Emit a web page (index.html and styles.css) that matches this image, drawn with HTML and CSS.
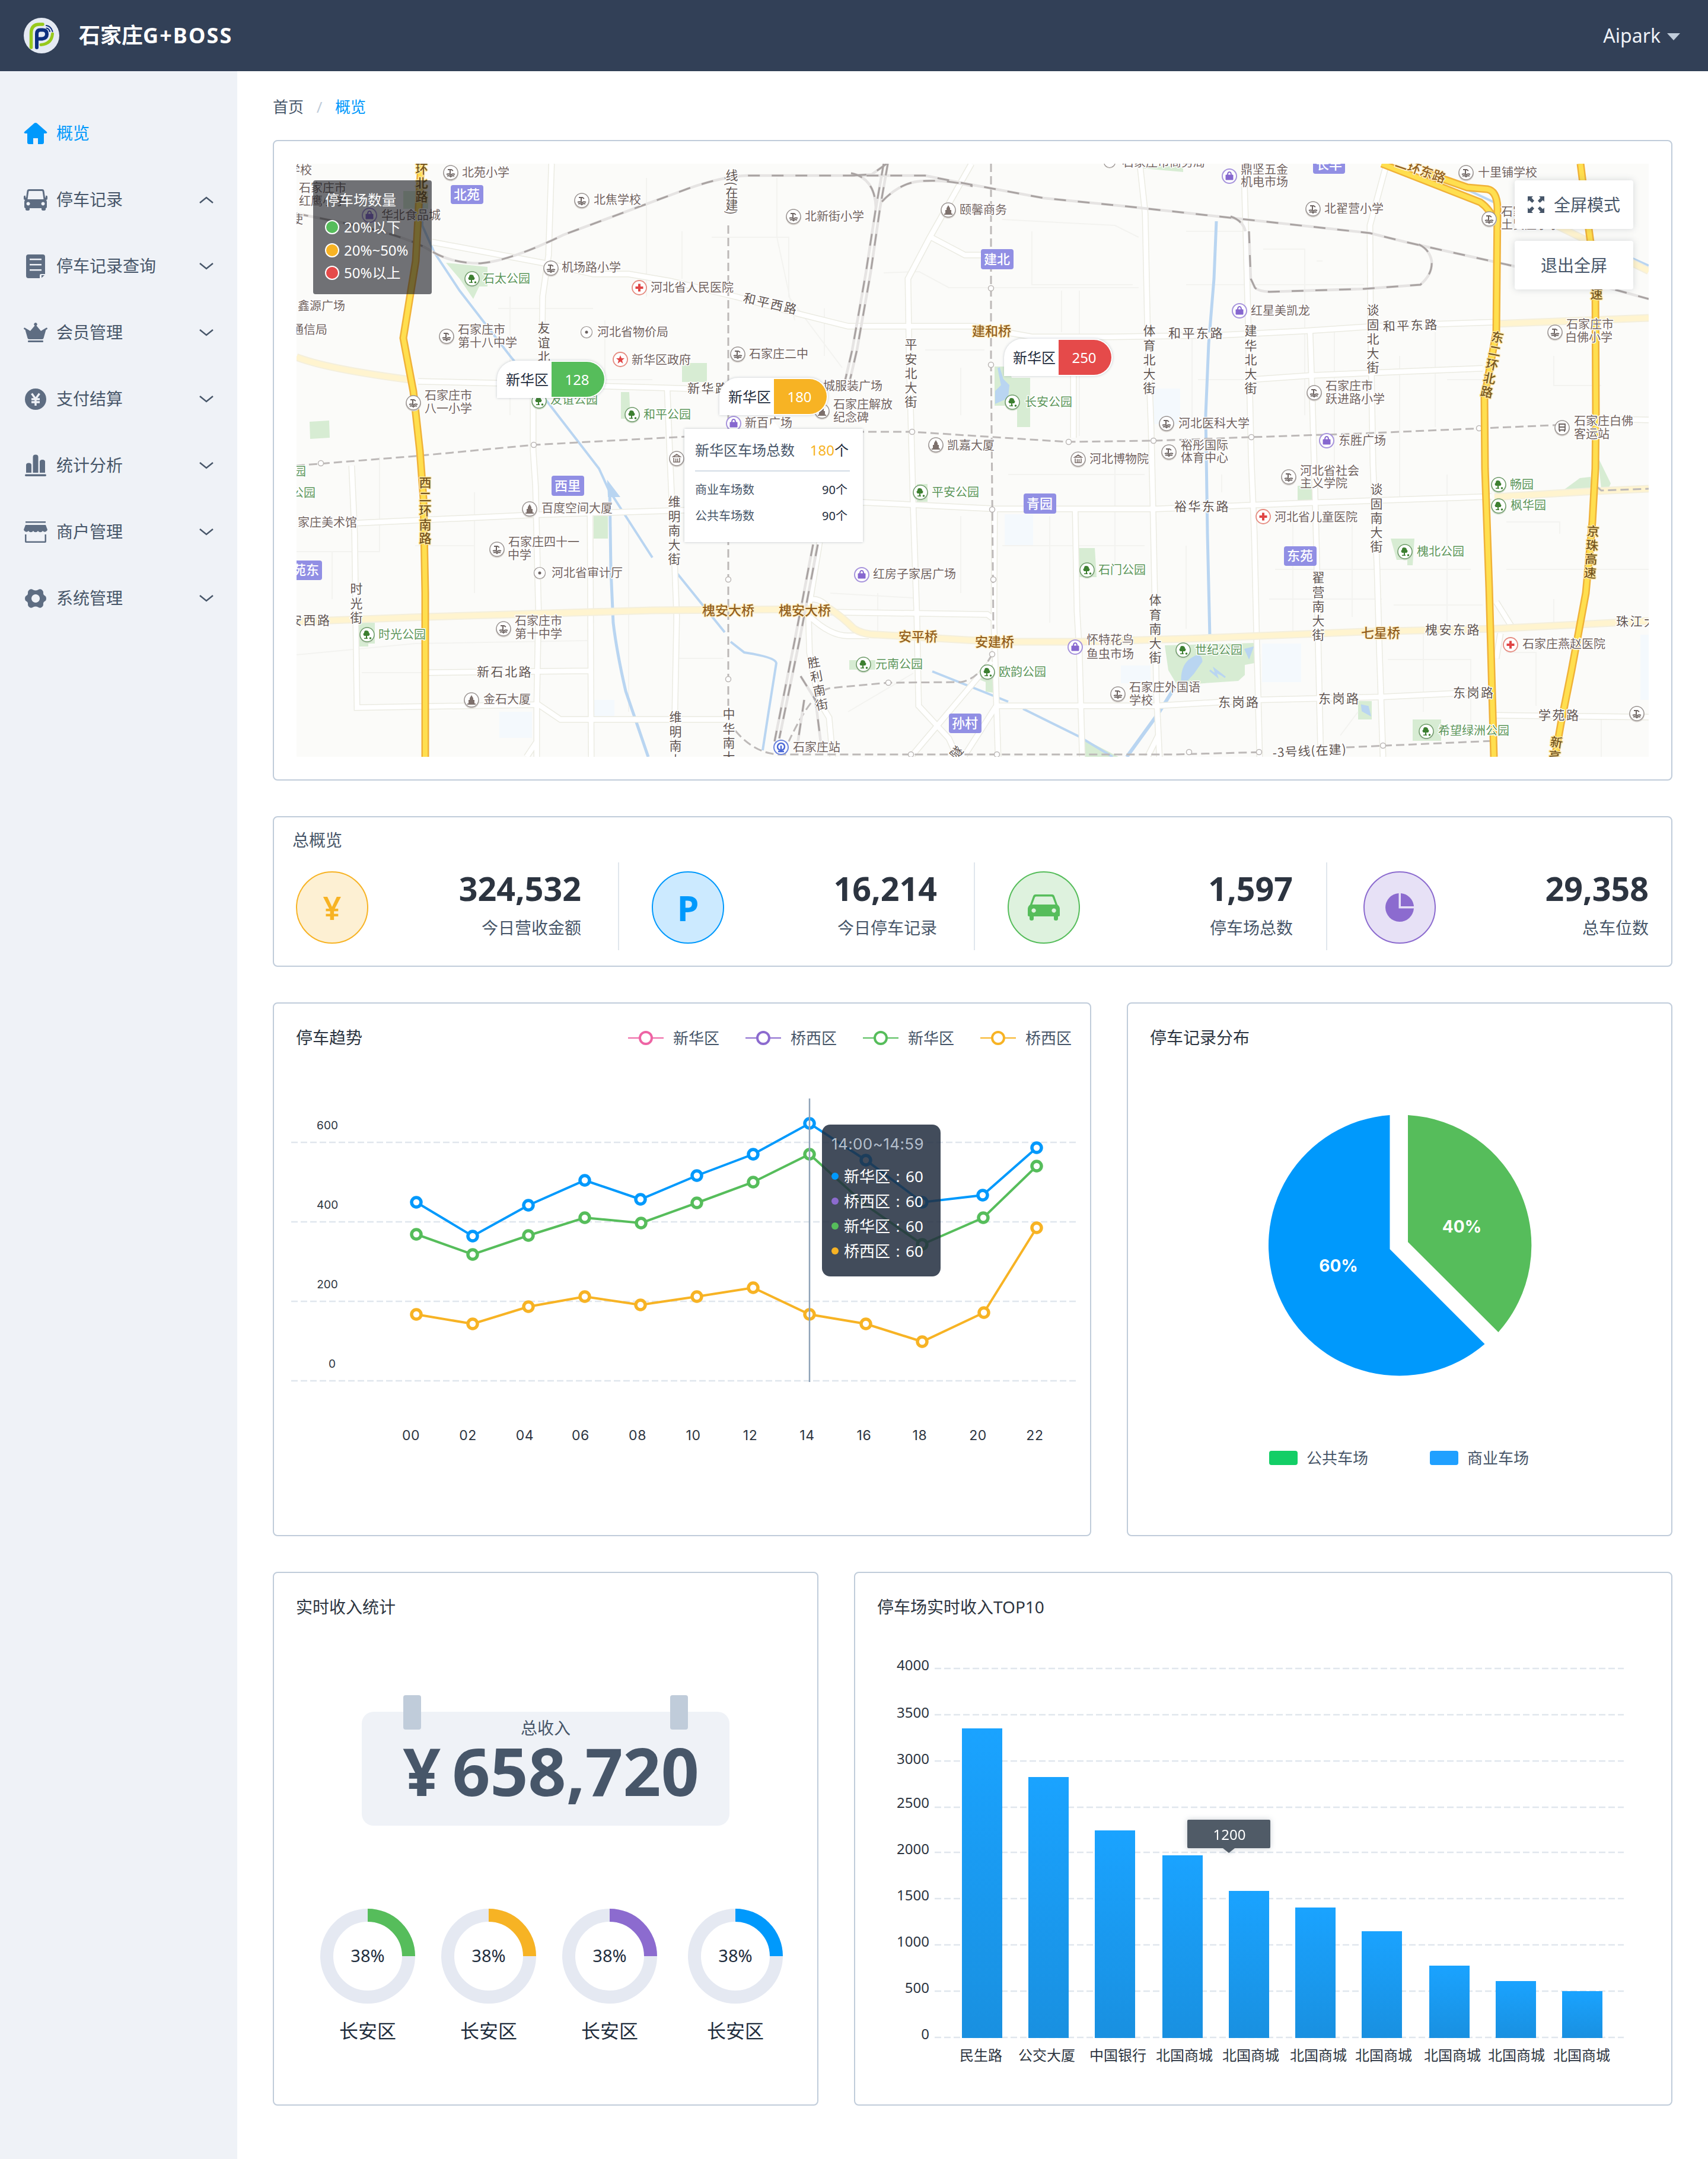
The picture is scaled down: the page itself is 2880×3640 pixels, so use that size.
FILE: index.html
```html
<!DOCTYPE html>
<html lang="zh-CN">
<head>
<meta charset="utf-8">
<title>石家庄G+BOSS</title>
<link rel="stylesheet" href="styles.css">
</head>
<body>
<header class="topbar">
  <div class="brand">
    <svg class="logo" viewBox="-30 -30 60 60">
      <circle r="30" fill="#e5eaf3"/>
      <path d="M-17.500 20V-4Q-17.500 -19 -3 -19H2" fill="none" stroke="#97c91c" stroke-width="5.500" stroke-linecap="round"/>
      <path d="M-1 15.500Q17 14 18.500 -3" fill="none" stroke="#97c91c" stroke-width="5" stroke-linecap="round"/>
      <path d="M-8 20V-3Q-8 -9.500 -2 -9.500H2Q9 -9.500 9 -2.500T1 5.500H-4" fill="none" stroke="#0d2f7e" stroke-width="6" stroke-linecap="round"/>
      <path d="M8 -17Q16 -16 18.500 -7M8.500 -12.500Q13 -11.500 14 -7" fill="none" stroke="#0d2f7e" stroke-width="2.200" stroke-linecap="round"/>
    </svg>
    <h1 class="brand-name">石家庄<span class="brand-latin">G+BOSS</span></h1>
  </div>
  <div class="user">Aipark<svg class="caret" viewBox="0 0 22 12"><path d="M0 0H22L11 12Z"/></svg></div>
</header>

<div class="layout">
<nav class="sidebar">
  <a class="nav-item active"><svg class="nav-icon" viewBox="0 0 40 40"><path d="M18 2.500Q20 1.300 22 2.500L38.500 17Q41 20 37 20H34V35Q34 38 31 38H24V28H16V38H9Q6 38 6 35V20H3Q-1 20 1.500 17Z"/></svg><span>概览</span></a>
  <a class="nav-item"><svg class="nav-icon" viewBox="0 0 40 40"><path fill-rule="evenodd" d="M9 2H31Q34 2 34.500 5L36 16H37V13Q40 12 40 15V18Q40 20 38 20L39 23V32Q39 34 37 34V36Q37 38 33.500 38T30 36V34H10V36Q10 38 6.500 38T3 36V34Q1 34 1 32V23L2 20Q0 20 0 18V15Q0 12 3 13V16H4L5.500 5Q6 2 9 2ZM9.500 5Q8.500 5 8.300 6L6.500 19H33.500L31.700 6Q31.500 5 30.500 5ZM7.500 23.500A3 3 0 1 0 7.600 23.500ZM32.500 23.500A3 3 0 1 0 32.600 23.500Z"/></svg><span>停车记录</span><svg class="chev" viewBox="0 0 24 14"><path d="M1 12L12 3L23 12"/></svg></a>
  <a class="nav-item"><svg class="nav-icon" viewBox="0 0 40 40"><path fill-rule="evenodd" d="M8 0H32Q36 0 36 4V33H29Q27 33 27 35V40H8Q4 40 4 36V4Q4 0 8 0ZM10 7V9.500H30V7ZM10 16V18.500H30V16ZM10 25V27.500H30V25ZM30 35H35L30 39.500Z"/></svg><span>停车记录查询</span><svg class="chev" viewBox="0 0 24 14"><path d="M1 2L12 11L23 2"/></svg></a>
  <a class="nav-item"><svg class="nav-icon" viewBox="0 0 40 40"><path d="M1.800 11.500L11 17L18.600 8A2.600 2.600 0 1 1 21.400 8L29 17L38.200 11.500Q40 11 40 13Q39.500 14.500 37.500 15L33.500 29Q33 31 31 31H9Q7 31 6.500 29L2.500 15Q0.500 14.500 0 13Q0 11 1.800 11.500ZM8 33H32Q33 33 33 34.500T32 36H8Q7 36 7 34.500T8 33Z"/></svg><span>会员管理</span><svg class="chev" viewBox="0 0 24 14"><path d="M1 2L12 11L23 2"/></svg></a>
  <a class="nav-item"><svg class="nav-icon" viewBox="0 0 40 40"><circle cx="20" cy="20" r="18"/><path d="M13.500 10.500L20 19.500L26.500 10.500M20 19V31M13 20H27M13 25H27" fill="none" stroke="#eff2f7" stroke-width="3.400"/></svg><span>支付结算</span><svg class="chev" viewBox="0 0 24 14"><path d="M1 2L12 11L23 2"/></svg></a>
  <a class="nav-item"><svg class="nav-icon" viewBox="0 0 40 40"><path d="M4 32V19Q4 15.500 8.500 15.500T13 19V32ZM15.500 32V5.500Q15.500 1.500 20 1.500T24.500 5.500V32ZM27 32V13.500Q27 10 31.500 10T36 13.500V32ZM3.500 34.500H36.500Q38 34.500 38 36.200T36.500 38H3.500Q2 38 2 36.200T3.500 34.500Z"/></svg><span>统计分析</span><svg class="chev" viewBox="0 0 24 14"><path d="M1 2L12 11L23 2"/></svg></a>
  <a class="nav-item"><svg class="nav-icon" viewBox="0 0 40 40"><path fill-rule="evenodd" d="M3 2H37V4.500H3ZM3 8H37L40 16A4.500 4.500 0 0 1 32 18A4.600 4.600 0 0 1 24 18A4.600 4.600 0 0 1 16 18A4.600 4.600 0 0 1 8 18A4.500 4.500 0 0 1 0 16ZM2 24H4.500V35.500H35.500V24H38V36Q38 38 36 38H4Q2 38 2 36Z"/></svg><span>商户管理</span><svg class="chev" viewBox="0 0 24 14"><path d="M1 2L12 11L23 2"/></svg></a>
  <a class="nav-item"><svg class="nav-icon" viewBox="0 0 40 40"><path fill-rule="evenodd" d="M11 4.500Q13 3.500 16 5.500Q20 7.500 24 5.500Q27 3.500 29 4.500Q33 6.500 33 10Q32.500 14 36 15.500Q38 16.500 38 20T36 24.500Q32.500 26 33 30Q33 33.500 29 35.500Q27 36.500 24 34.500Q20 32.500 16 34.500Q13 36.500 11 35.500Q7 33.500 7 30Q7.500 26 4 24.500Q2 23.500 2 20T4 15.500Q7.500 14 7 10Q7 6.500 11 4.500ZM20 13A7 7 0 1 0 20.100 13Z"/></svg><span>系统管理</span><svg class="chev" viewBox="0 0 24 14"><path d="M1 2L12 11L23 2"/></svg></a>
</nav>

<main class="content">
  <div class="crumbs"><span>首页</span><span class="sep">/</span><span class="here">概览</span></div>

  <section class="card map-card">
    <svg class="map" viewBox="500 276 2280 1000">
      <defs>
        <g id="pin"><circle r="13" cy="1.500" fill="#d8d4d0"/><circle r="12" fill="#fff" stroke="#9a9492" stroke-width="1.500"/></g>
        <g id="school"><use href="#pin"/><path d="M-5 -5H1L4 -3M-1 -5V2M-7 3Q-3 1 0 4Q3 1 7 3M-6 6Q-3 4 0 7Q3 4 6 6" fill="none" stroke="#6b6260" stroke-width="2"/></g>
        <g id="bld"><use href="#pin"/><path d="M0 -8L3 -3V0H5V6H-5V0H-3V-3ZM-7 6H7V8H-7Z" fill="#7d706c"/></g>
        <g id="museum"><use href="#pin"/><path d="M-6 -3L0 -7L6 -3ZM-5 -1V6H5V-1M-1.500 0V6M1.500 0V6" fill="none" stroke="#7d706c" stroke-width="1.600"/></g>
        <g id="park"><circle r="13" cy="1.500" fill="#cfdccb"/><circle r="12" fill="#fff" stroke="#6d9a68" stroke-width="1.500"/><path d="M-2 -7Q3 -7 3 -3Q6 -1 3 2H-5Q-8 -1 -5 -3Q-5 -7 -2 -7ZM-2 2H0V7H-2ZM-5 5.500H1V7H-5Z" fill="#3d7f31"/><circle cx="5.500" cy="6" r="1.800" fill="#3d7f31"/></g>
        <g id="hosp"><circle r="12" fill="#fff" stroke="#e58b80" stroke-width="1.800"/><path d="M-6.500 0H6.500M0 -6.500V6.500" stroke="#e04545" stroke-width="4"/></g>
        <g id="gov"><circle r="12" fill="#fff" stroke="#e58b80" stroke-width="1.800"/><path d="M0 -7L2 -2H7L3 1.500L4.500 7L0 3.500L-4.500 7L-3 1.500L-7 -2H-2Z" fill="#e04545"/></g>
        <g id="shop"><circle r="12" fill="#fff" stroke="#a794dc" stroke-width="2"/><path d="M-6 -2H6V6H-6Z" fill="#8667cf" stroke="#8667cf" stroke-width="1"/><path d="M-3 -2Q-3 -7 0 -7T3 -2" fill="none" stroke="#8667cf" stroke-width="2"/></g>
        <g id="rail"><circle r="12" fill="#fff" stroke="#6a82dc" stroke-width="2"/><circle r="6" cy="-1" fill="none" stroke="#4a68d8" stroke-width="2.500"/><path d="M0 -3V7M-5 7H5" stroke="#4a68d8" stroke-width="2.500"/></g>
        <g id="dot"><circle r="10" cy="1" fill="#d8d4d0"/><circle r="9.500" fill="#fff" stroke="#9a9492" stroke-width="1.200"/><circle r="2.500" fill="#6b6260"/></g>
        <g id="bus"><use href="#pin"/><path d="M-5 -6H5V4H-5ZM-5 -1H5M-4 4V7M4 4V7" fill="none" stroke="#6b6260" stroke-width="1.800"/></g>
      </defs>
      <rect x="500" y="276" width="2280" height="1000" fill="#fbfbf9"/>

      <g class="parks">
        <path d="M752 443L822 450V483H808L798 504L775 470Z"/><path d="M1150 612H1192V644H1150Z"/><path d="M1047 661H1061L1063 706H1047Z"/><path d="M522 711L555 709L556 738L523 740Z"/>
        <path d="M680 322H722V352H680Z"/><path d="M1677 618H1700L1706 637H1737V720H1715V684H1677Z"/><path d="M1001 870H1025V908H1001Z"/><path d="M604 1050H632V1085H621V1090H605Z"/>
        <path d="M1819 924H1846L1849 973H1820Z"/><path d="M1546 816H1564V846H1546Z"/><path d="M1432 1113H1476V1129H1432Z"/><path d="M1645 1143L1668 1112L1676 1118V1168L1662 1166V1150Z"/>
        <path d="M1964 1088L2115 1084V1118L2099 1121V1138L2088 1148L1985 1155L1970 1130Z"/><path d="M2345 908H2385L2382 953H2373V944H2355Z"/><path d="M2188 819H2213V845H2188Z"/><path d="M2290 1182H2313V1213H2290Z"/>
        <path d="M2382 1213H2430V1249H2382Z"/><path d="M1828 1246L1886 1276H1828Z"/><path d="M2634 828L2664 806L2682 804L2685 828Z"/><path d="M2694 770L2716 815L2712 824H2700Z"/><path d="M1925 278L1995 281V290L1928 284Z"/><path d="M902 660H922V680H902Z"/>
      </g>
      <g fill="#f4f9fd"><path d="M842 1200H897V1244H842ZM1002 1180H1036V1212H1002ZM1694 867H1742V920H1694ZM1890 1122H1940V1152H1890ZM2128 1085H2194V1150H2128ZM1945 655H1990V715H1945ZM2766 1070H2780V1180H2766Z"/></g>

      <g class="minor">
        <path d="M500 930H560V1010M640 770V930H560M800 830V1000M800 920H700M840 520H1000M1090 300V500M500 1104L700 1085L990 1080M860 700V500M1020 540V640H1100M1060 880V1200M1140 1110H1220M1150 390V470M610 1134H720M1310 300V400L1340 540M1200 400H1330V500L1420 620M1490 460L1550 458L1600 485H1920M1790 490V560M1820 490V735M1740 390V480H1910M1690 370L1880 380L1920 400M1620 620V700M1390 520V600M1560 590H1660"/>
        <path d="M1480 1000V1070M1400 1000L1540 1008M1620 870V1000M1690 920H1930M1770 870V1050M1880 780V950M1700 800H1930M1430 1200L1540 1135M2010 560V720M2130 420H2200V700M2220 440H2230M2000 480H2300M2420 560V720M2020 640H2110M2250 560V800M2360 600V840M2440 800V1050M2540 960H2780M2620 1010V1060M2540 880H2630V900M2340 1112H2480V1230M2350 1020H2500M2150 960H2480M2180 880V1070M2060 800V830M2000 920V1060M2280 880V1040M2140 1010H2330M2260 1240L2290 1200M2400 1060V1200M2540 1100H2590V1190M2700 1210V1276M2000 390H2100M2620 600V650H2700M2440 640H2520"/>
      </g>

      <g class="river">
        <path d="M712 330V380L732 425L775 490L860 600L925 680L1010 790L1026 825L1100 940M1142 967L1222 1066M1232 1082L1255 1100Q1308 1108 1309 1118L1296 1200L1286 1265"/>
        <path d="M1028 820L1030 960L1034 1050Q1040 1100 1055 1165L1093 1276" stroke-width="5"/><path d="M1026 815L1042 836H1027Z" fill="#b9d5f1"/>
        <path d="M2051 373L2047 470L2038 580L2033 700L2036 900L2040 1074" stroke-width="5"/><path d="M1572 1132L1700 1183M1725 1195L1820 1242L1876 1276"/><path d="M1980 1160L1955 1200L1900 1276" stroke-width="6"/><path d="M2436 302L2530 346M2630 383L2700 412L2780 448"/>
        <path d="M1684 620L1690 640L1700 650L1698 670L1680 678V660L1690 650Z" fill="#b9d5f1"/><path d="M2010 1110Q2025 1100 2026 1115L2012 1135L2002 1146H1993Q1993 1120 2010 1110ZM2040 1130L2052 1140L2048 1128L2066 1142M2100 1095L2112 1092L2106 1108Z" fill="#b9d5f1" stroke-width="3"/><path d="M2297 1190L2306 1192L2309 1204L2298 1198Z" fill="#b9d5f1"/>
      </g>

      <g class="road-case"><use href="#roads"/></g>
      <g class="road-fill"><g id="roads">
        <path d="M930 276L925 430L915 500L914 580M899 670V760L903 820L908 1030L905 1190V1276M904 1252L888 1276"/>
        <path d="M728 408L930 446L1000 462H1060L1130 474L1240 500L1350 530L1430 550H1640L1740 568H1870L2060 565L2200 558L2320 550L2523 543"/>
        <path d="M705 643L840 646L1225 657"/><path d="M1638 276L1568 400L1531 470L1533 600L1540 860L1546 1040L1549 1190L1600 1245L1614 1276M1570 400L1627 430H1660"/>
        <path d="M1922 276L1931 360L1935 560L1941 720L1944 850L1947 1000L1950 1170L1955 1276"/><path d="M2098 300L2101 400L2105 560L2110 780L2115 900L2119 1080L2124 1276"/>
        <path d="M2338 276L2310 380L2311 540L2315 780L2322 960L2326 1100L2332 1276"/><path d="M2209 560L2213 680L2217 820L2220 930L2223 1100L2227 1276"/><path d="M2110 640L2210 633L2500 621"/>
        <path d="M600 882L900 868L1160 860L1455 847L1540 851L1680 858H1950L2200 848L2515 837"/><path d="M593 785L598 900L602 1193L908 1188L945 1213H1225M720 1134L995 1131M995 865L997 1276M1125 655L1130 780L1138 960L1141 1040L1137 1250"/>
        <path d="M1813 862L1816 1030L1820 1100L1825 1276M1677 860L1676 1050L1683 1276M1680 1190H1950L2120 1180L2330 1175L2515 1166M1672 1115L1536 1276M1680 1190L1625 1276M1953 1240L1935 1276"/>
        <path d="M1368 1010Q1390 1010 1400 1032L1665 1036L1676 1044M1366 1040Q1400 1072 1430 1072H1465M1382 914L1363 1030L1365 1100L1380 1180L1398 1210L1404 1276M1810 610V738M2523 1206L2780 1209M2523 1015L2548 1055M2530 1068L2523 1110M2690 706L2780 708"/>
      </g></g>

      <g class="pale-case"><use href="#pale"/></g>
      <g class="pale-fill"><g id="pale">
        <path d="M500 602Q550 622 697 641"/><path d="M500 1048L720 1040L1100 1029L1400 1027Q1420 1040 1440 1060Q1455 1070 1480 1070L1680 1082L1820 1082L2000 1077L2300 1065L2520 1060L2660 1053L2780 1047"/><path d="M2523 546L2780 536M2600 368L2780 457M2520 838L2690 828L2780 824"/>
      </g></g>

      <g class="metro">
        <path d="M500 785L700 769L900 750L1160 736L1455 728L1538 728L1800 745L1945 743L2110 737L2290 731L2500 722L2640 716"/><path d="M1228 380V1190M1240 1232Q1270 1268 1310 1272H1980L2130 1268M2270 1260L2520 1249M1671 276V610L1675 1060M1673 1103Q1650 1145 1620 1150L1498 1151L1400 1160Q1370 1165 1330 1250M2692 800V820L2700 827L2780 824"/>
        <g class="stops"><circle cx="541" cy="781" r="4.500"/><circle cx="709" cy="768" r="4.500"/><circle cx="900" cy="750" r="4.500"/><circle cx="1538" cy="728" r="4.500"/><circle cx="1802" cy="745" r="4.500"/><circle cx="1945" cy="743" r="4.500"/><circle cx="2110" cy="737" r="4.500"/><circle cx="2494" cy="722" r="4.500"/><circle cx="1228" cy="977" r="4.500"/><circle cx="1228" cy="1145" r="4.500"/><circle cx="1671" cy="486" r="4.500"/><circle cx="1671" cy="615" r="4.500"/><circle cx="1673" cy="859" r="4.500"/><circle cx="1675" cy="977" r="4.500"/><circle cx="1673" cy="1103" r="4.500"/><circle cx="1498" cy="1151" r="4.500"/><circle cx="1536" cy="1272" r="4.500"/><circle cx="1681" cy="1272" r="4.500"/><circle cx="2005" cy="1268" r="4.500"/><circle cx="2123" cy="1268" r="4.500"/><circle cx="2332" cy="1257" r="4.500"/></g>
      </g>

      <g class="rail-base"><use href="#rails"/></g>
      <g class="rail-dash"><g id="rails">
        <path d="M500 360L600 380Q690 400 725 422Q760 444 810 444Q860 440 950 396L1160 318Q1220 297 1260 296H1560L1620 308L1760 334L1900 348L2010 360L2310 393L2370 408L2545 447L2700 482L2780 504"/>
        <path d="M2075 365Q2096 372 2100 390M2106 390L2109 470L2116 485Q2122 491 2140 492L2300 487L2395 480Q2416 462 2414 440Q2410 420 2392 412"/>
        <path d="M1490 276L1477 350L1460 460L1437 590L1423 650M1497 276L1484 350L1468 460L1445 590L1431 650M1371 918L1340 1080L1306 1250M1379 918L1348 1080L1314 1245"/><path d="M1435 292Q1475 300 1477 350M1487 340Q1520 305 1560 305Q1600 303 1640 314M1495 276L1470 294L1435 296M1350 1140L1375 1180L1385 1260M1356 1180L1344 1260"/>
      </g></g>

      <g class="hw-case"><use href="#hw"/></g>
      <g class="hw-fill"><g id="hw">
        <path d="M710 276L701 440L680 570L697 660L708 760L714 840L717 1000V1276"/>
        <path d="M2330 276L2496 341Q2512 352 2522 375M2400 290L2474 316L2508 319Q2524 322 2525 350L2523 560L2503 670L2504 790L2511 990L2519 1276"/>
        <path d="M2665 276L2673 340L2690 470L2691 700L2690 790L2685 880L2674 1000L2650 1130L2632 1220L2622 1276"/>
      </g></g>

      <g class="badges">
        <rect x="760" y="312" width="55" height="32" rx="4"/><rect x="1654" y="420" width="55" height="34" rx="4"/><rect x="2214" y="262" width="54" height="31" rx="4"/><rect x="930" y="802" width="55" height="34" rx="4"/><rect x="488" y="945" width="55" height="33" rx="4"/><rect x="1726" y="832" width="55" height="34" rx="4"/><rect x="2165" y="921" width="55" height="33" rx="4"/><rect x="1600" y="1203" width="55" height="33" rx="4"/>
      </g>
      <g class="badge-text" transform="translate(0 8)"><text x="787" y="328">北苑</text><text x="1681" y="437">建北</text><text x="2241" y="277">长丰</text><text x="957" y="819">西里</text><text x="516" y="961">苑东</text><text x="1753" y="849">青园</text><text x="2192" y="937">东苑</text><text x="1627" y="1219">孙村</text></g>

      <g class="icons">
        <use href="#shop" x="623" y="363"/><use href="#school" x="760" y="291"/><use href="#school" x="981" y="338"/><use href="#school" x="929" y="452"/><use href="#park" x="796" y="470"/><use href="#hosp" x="1078" y="485"/><use href="#school" x="753" y="567"/><use href="#dot" x="989" y="560"/><use href="#gov" x="1046" y="606"/><use href="#school" x="697" y="679"/><use href="#park" x="909" y="676"/><use href="#park" x="1066" y="699"/><use href="#shop" x="1237" y="714"/>
        <use href="#school" x="1338" y="365"/><use href="#bld" x="1599" y="354"/><use href="#school" x="1244" y="597"/><use href="#park" x="1707" y="678"/><use href="#bld" x="1386" y="693"/><use href="#bld" x="1578" y="750"/><use href="#museum" x="1818" y="774"/><use href="#school" x="1967" y="714"/><use href="#school" x="1971" y="762"/><use href="#dot" x="1871" y="273"/><use href="#museum" x="1141" y="773"/>
        <use href="#shop" x="2073" y="297"/><use href="#school" x="2472" y="291"/><use href="#school" x="2214" y="352"/><use href="#school" x="2511" y="369"/><use href="#shop" x="2090" y="524"/><use href="#school" x="2622" y="560"/><use href="#school" x="2216" y="662"/><use href="#bus" x="2634" y="721"/><use href="#shop" x="2237" y="743"/>
        <use href="#bld" x="893" y="858"/><use href="#school" x="838" y="926"/><use href="#dot" x="910" y="966"/><use href="#park" x="619" y="1070"/><use href="#school" x="849" y="1060"/><use href="#bld" x="795" y="1180"/><use href="#park" x="1552" y="830"/><use href="#shop" x="1453" y="969"/><use href="#park" x="1833" y="961"/><use href="#shop" x="1813" y="1091"/><use href="#park" x="1456" y="1120"/><use href="#park" x="1665" y="1133"/><use href="#school" x="1885" y="1170"/><use href="#rail" x="1317" y="1260"/>
        <use href="#school" x="2173" y="804"/><use href="#hosp" x="2130" y="871"/><use href="#park" x="2369" y="930"/><use href="#park" x="2527" y="817"/><use href="#park" x="2527" y="853"/><use href="#hosp" x="2547" y="1087"/><use href="#park" x="1995" y="1096"/><use href="#school" x="2760" y="1203"/><use href="#park" x="2405" y="1233"/>
      </g>

      <g class="poi" transform="translate(0 7)">
        <text x="486" y="287">学校</text><text x="504" y="317">石家庄市</text><text x="504" y="339">红鹰小学</text><text x="491" y="370">使</text><text x="643" y="363">华北食品城</text><text x="779" y="291">北苑小学</text><text x="1001" y="337">北焦学校</text><text x="947" y="451">机场路小学</text><text x="1097" y="485">河北省人民医院</text><text x="502" y="516">鑫源广场</text><text x="492" y="556">通信局</text><text x="772" y="556">石家庄市</text><text x="772" y="578">第十八中学</text><text x="1007" y="560">河北省物价局</text><text x="1065" y="607">新华区政府</text><text x="716" y="667">石家庄市</text><text x="716" y="689">八一小学</text><text x="1256" y="713">新百广场</text>
        <text x="1357" y="365">北新街小学</text><text x="1618" y="354">颐馨商务</text><text x="1263" y="597">石家庄二中</text><text x="1388" y="651">城服装广场</text><text x="1405" y="682">石家庄解放</text><text x="1405" y="704">纪念碑</text><text x="1597" y="751">凯嘉大厦</text><text x="1837" y="774">河北博物院</text><text x="1987" y="714">河北医科大学</text><text x="1991" y="751">裕彤国际</text><text x="1991" y="772">体育中心</text><text x="1892" y="274">石家庄市商务局</text>
        <text x="2092" y="286">鼎坚五金</text><text x="2092" y="307">机电市场</text><text x="2492" y="291">十里铺学校</text><text x="2233" y="352">北翟营小学</text><text x="2531" y="357">石家庄市</text><text x="2531" y="379">土贤庄小学</text><text x="2109" y="524">红星美凯龙</text><text x="2641" y="547">石家庄市</text><text x="2639" y="569">白佛小学</text><text x="2235" y="651">石家庄市</text><text x="2235" y="673">跃进路小学</text><text x="2654" y="710">石家庄白佛</text><text x="2654" y="732">客运站</text><text x="2257" y="743">东胜广场</text>
        <text x="913" y="857">百度空间大厦</text><text x="502" y="881">家庄美术馆</text><text x="857" y="914">石家庄四十一</text><text x="856" y="936">中学</text><text x="930" y="966">河北省审计厅</text><text x="868" y="1047">石家庄市</text><text x="868" y="1069">第十中学</text><text x="815" y="1179">金石大厦</text><text x="1472" y="968">红房子家居广场</text><text x="1832" y="1079">怀特花鸟</text><text x="1832" y="1103">鱼虫市场</text><text x="1904" y="1159">石家庄外国语</text><text x="1904" y="1181">学校</text><text x="1337" y="1260">石家庄站</text>
        <text x="2192" y="794">河北省社会</text><text x="2192" y="815">主义学院</text><text x="2149" y="872">河北省儿童医院</text><text x="2567" y="1086">石家庄燕赵医院</text>
        <g class="green"><text x="814" y="470">石太公园</text><text x="928" y="674">友谊公园</text><text x="1085" y="699">和平公园</text><text x="496" y="795">园</text><text x="492" y="831">公园</text><text x="1728" y="678">长安公园</text><text x="638" y="1070">时光公园</text><text x="1571" y="830">平安公园</text><text x="1852" y="961">石门公园</text><text x="1476" y="1120">元南公园</text><text x="1684" y="1133">欧韵公园</text><text x="2389" y="930">槐北公园</text><text x="2546" y="817">畅园</text><text x="2547" y="852">枫华园</text><text x="2015" y="1096">世纪公园</text><text x="2425" y="1232">希望绿洲公园</text></g>
      </g>
      <g class="street" transform="translate(0 7)">
        <text x="1159" y="655">新华路</text><text x="1252" y="502" transform="rotate(13 1252 502)">和平西路</text><text x="1970" y="562">和平东路</text><text x="2332" y="551" transform="rotate(-2 2332 551)">和平东路</text><text x="488" y="1046">安西路</text><text x="804" y="1133">新石北路</text><text x="1980" y="854">裕华东路</text><text x="2403" y="1062">槐安东路</text><text x="2725" y="1048">珠江大街</text><text x="2054" y="1184">东岗路</text><text x="2223" y="1178">东岗路</text><text x="2450" y="1168">东岗路</text><text x="2594" y="1206">学苑路</text><text x="2146" y="1270" class="loose" transform="rotate(-3 2146 1270)">-3号线(在建)</text><text x="1612" y="1275" transform="rotate(-50 1612 1275)">隧</text>
      </g>
      <g class="street vertical" transform="translate(2 0)">
        <text x="915" y="542">友谊北</text><text x="1534" y="570">平安北大街</text><text x="1936" y="547">体育北大街</text><text x="2107" y="547">建华北大街</text><text x="2313" y="512">谈固北大街</text><text x="1232" y="285" class="tight">线(在建)</text><text x="599" y="982">时光街</text><text x="1135" y="835">维明南大街</text><text x="1137" y="1198">维明南大街</text><text x="1227" y="1193">中华南大街</text><text x="1368" y="1106" transform="rotate(-11 1368 1106)">胜利南街</text><text x="1946" y="1001">体育南大街</text><text x="2221" y="963">翟营南大街</text><text x="2319" y="814">谈固南大街</text>
      </g>
      <g class="bridge" transform="translate(0 8)"><text x="1639" y="558">建和桥</text><text x="1184" y="1029">槐安大桥</text><text x="1313" y="1029">槐安大桥</text><text x="1515" y="1073">安平桥</text><text x="1644" y="1082">安建桥</text><text x="2295" y="1067">七星桥</text><text x="2351" y="272" transform="rotate(19 2351 272)">二环东路</text></g>
      <g class="bridge vertical hwname" transform="translate(1 0)"><text x="710" y="274">环北路</text><text x="716" y="803">西二环南路</text><text x="2526" y="558" transform="rotate(11 2526 558)">东二环北路</text><text x="2691" y="485">速</text><text x="2686" y="885" transform="rotate(4 2686 885)">京珠高速</text><text x="2625" y="1241" transform="rotate(8 2625 1241)">新高</text></g>
    </svg>

    <div class="map-legend">
      <p class="legend-title">停车场数量</p>
      <p class="legend-row"><i class="bullet bg-green"></i>20%以下</p>
      <p class="legend-row"><i class="bullet bg-yellow"></i>20%~50%</p>
      <p class="legend-row"><i class="bullet bg-red"></i>50%以上</p>
    </div>
    <div class="map-buttons">
      <button class="map-btn"><svg class="full-icon" viewBox="0 0 28 28"><path d="M0 0H9L6.500 2.500L11 7.500L7.500 11L2.500 6.500L0 9ZM28 0V9L25.500 6.500L20.500 11L17 7.500L21.500 2.500L19 0ZM0 28V19L2.500 21.500L7.500 17L11 20.500L6.500 25.500L9 28ZM28 28H19L21.500 25.500L17 20.500L20.500 17L25.500 21.500L28 19Z"/></svg>全屏模式</button>
      <button class="map-btn">退出全屏</button>
    </div>
    <div class="marker m-green"><span class="m-name">新华区</span><span class="m-count bg-green">128</span></div>
    <div class="marker m-yellow"><span class="m-name">新华区</span><span class="m-count bg-yellow">180</span></div>
    <div class="marker m-red"><span class="m-name">新华区</span><span class="m-count bg-red">250</span></div>
    <div class="popup">
      <p class="popup-head"><span>新华区车场总数</span><b><em>180</em>个</b></p>
      <p class="popup-row"><span>商业车场数</span><b>90个</b></p>
      <p class="popup-row"><span>公共车场数</span><b>90个</b></p>
    </div>
  </section>

  <section class="card overview">
    <h2 class="overview-title">总概览</h2>
    <div class="stats">
      <div class="stat"><span class="disc d-yellow disc-yen">¥</span><div class="stat-text"><b>324,532</b><span>今日营收金额</span></div></div>
      <i class="rule"></i>
      <div class="stat"><span class="disc d-blue disc-p">P</span><div class="stat-text"><b>16,214</b><span>今日停车记录</span></div></div>
      <i class="rule"></i>
      <div class="stat"><span class="disc d-green"><svg viewBox="0 0 56 44"><path fill-rule="evenodd" d="M14 0H42Q45 0 46 3L51 17Q55 20 55 25V35Q55 37 52 37V41Q52 44 48.500 44T45 41V37H11V41Q11 44 7.500 44T4 41V37Q1 37 1 35V25Q1 20 5 17L10 3Q11 0 14 0ZM15 3.500Q13.500 3.500 13 5L8.500 17H47.500L43 5Q42.500 3.500 41 3.500ZM11 23.500A3.600 3.600 0 1 0 11.100 23.500ZM45 23.500A3.600 3.600 0 1 0 45.100 23.500Z"/></svg></span><div class="stat-text"><b>1,597</b><span>停车场总数</span></div></div>
      <i class="rule rule-last"></i>
      <div class="stat"><span class="disc d-purple"><svg viewBox="0 0 56 56"><path d="M26.500 4A24 24 0 1 0 52 29.500H26.500ZM30 4V26H52A24 24 0 0 0 30 4Z"/></svg></span><div class="stat-text"><b>29,358</b><span>总车位数</span></div></div>
    </div>
  </section>

  <div class="row">
    <section class="card trend">
      <div class="card-head">
        <h2>停车趋势</h2>
        <div class="series-legend">
          <span class="series c-pink"><i></i>新华区</span><span class="series c-purple"><i></i>桥西区</span><span class="series c-green"><i></i>新华区</span><span class="series c-yellow"><i></i>桥西区</span>
        </div>
      </div>
      <svg class="chart" viewBox="462 1770 1376 818">
        <path class="grid" d="M491 1926H1814M491 2060H1814M491 2194H1814M491 2328H1814"/>
        <g class="y-small"><text x="552" y="1904">600</text><text x="552" y="2038">400</text><text x="552" y="2172">200</text><text x="560" y="2306">0</text></g>
        <g class="x-axis"><text x="693" y="2428">00</text><text x="789" y="2428">02</text><text x="885" y="2428">04</text><text x="979" y="2428">06</text><text x="1075" y="2428">08</text><text x="1169" y="2428">10</text><text x="1265" y="2428">12</text><text x="1361" y="2428">14</text><text x="1457" y="2428">16</text><text x="1551" y="2428">18</text><text x="1649" y="2428">20</text><text x="1745" y="2428">22</text></g>
        <g class="line s-yellow"><path d="M702 2216L797 2232L891 2203L986 2186L1080 2200L1175 2186L1270 2171L1365 2216L1460 2232L1555 2262L1659 2213L1748 2070"/><circle cx="702" cy="2216" r="8"/><circle cx="797" cy="2232" r="8"/><circle cx="891" cy="2203" r="8"/><circle cx="986" cy="2186" r="8"/><circle cx="1080" cy="2200" r="8"/><circle cx="1175" cy="2186" r="8"/><circle cx="1270" cy="2171" r="8"/><circle cx="1365" cy="2216" r="8"/><circle cx="1460" cy="2232" r="8"/><circle cx="1555" cy="2262" r="8"/><circle cx="1659" cy="2213" r="8"/><circle cx="1748" cy="2070" r="8"/></g>
        <g class="line s-green"><path d="M702 2081L797 2115L891 2083L986 2053L1081 2062L1175 2028L1270 1993L1365 1946L1460 2032L1555 2098L1658 2053L1748 1966"/><circle cx="702" cy="2081" r="8"/><circle cx="797" cy="2115" r="8"/><circle cx="891" cy="2083" r="8"/><circle cx="986" cy="2053" r="8"/><circle cx="1081" cy="2062" r="8"/><circle cx="1175" cy="2028" r="8"/><circle cx="1270" cy="1993" r="8"/><circle cx="1365" cy="1946" r="8"/><circle cx="1555" cy="2098" r="8"/><circle cx="1658" cy="2053" r="8"/><circle cx="1748" cy="1966" r="8"/></g>
        <g class="line s-blue"><path d="M702 2027L797 2084L891 2032L986 1990L1080 2022L1175 1982L1270 1946L1365 1894L1460 1956L1555 2027L1657 2015L1748 1935"/><circle cx="702" cy="2027" r="8"/><circle cx="797" cy="2084" r="8"/><circle cx="891" cy="2032" r="8"/><circle cx="986" cy="1990" r="8"/><circle cx="1080" cy="2022" r="8"/><circle cx="1175" cy="1982" r="8"/><circle cx="1270" cy="1946" r="8"/><circle cx="1365" cy="1894" r="8"/><circle cx="1460" cy="1956" r="8"/><circle cx="1555" cy="2027" r="8"/><circle cx="1657" cy="2015" r="8"/><circle cx="1748" cy="1935" r="8"/></g>
        <path d="M1365 1852V2330" stroke="#8fa3b8" stroke-width="2.500"/>
      </svg>
      <div class="trend-tip">
        <p class="tip-time">14:00~14:59</p>
        <p class="tip-row"><i class="bg-blue"></i>新华区<s>:</s>60</p>
        <p class="tip-row"><i class="bg-purple"></i>桥西区<s>:</s>60</p>
        <p class="tip-row"><i class="bg-green"></i>新华区<s>:</s>60</p>
        <p class="tip-row"><i class="bg-yellow"></i>桥西区<s>:</s>60</p>
      </div>
    </section>
    <section class="card side">
      <div class="card-head"><h2>停车记录分布</h2></div>
      <svg class="pie" viewBox="1902 1770 916 600">
        <path fill="#0099fc" d="M2343.500 1880A220.500 220 0 1 0 2503.500 2266L2343.500 2106Z"/>
        <path fill="#56bd5b" d="M2374 1880A220.500 220 0 0 1 2526.500 2246L2374 2094Z"/>
        <g class="pie-label"><text x="2257" y="2144">60%</text><text x="2465" y="2078">40%</text></g>
      </svg>
      <div class="pie-legend"><span class="key k-green"><i></i>公共车场</span><span class="key k-blue"><i></i>商业车场</span></div>
    </section>
  </div>

  <div class="row">
    <section class="card side">
      <div class="card-head"><h2>实时收入统计</h2></div>
      <div class="board"><span class="board-label">总收入</span><strong class="board-sum">¥ 658,720</strong></div>
      <div class="donuts">
        <div class="donut"><svg viewBox="-80 -80 160 160"><circle r="69"/><path stroke="#56bd5b" d="M0 -69A69 69 0 0 1 69 0"/><text y="10">38%</text></svg><span>长安区</span></div>
        <div class="donut"><svg viewBox="-80 -80 160 160"><circle r="69"/><path stroke="#f7b324" d="M0 -69A69 69 0 0 1 69 0"/><text y="10">38%</text></svg><span>长安区</span></div>
        <div class="donut"><svg viewBox="-80 -80 160 160"><circle r="69"/><path stroke="#8c6bcf" d="M0 -69A69 69 0 0 1 69 0"/><text y="10">38%</text></svg><span>长安区</span></div>
        <div class="donut"><svg viewBox="-80 -80 160 160"><circle r="69"/><path stroke="#0099fc" d="M0 -69A69 69 0 0 1 69 0"/><text y="10">38%</text></svg><span>长安区</span></div>
      </div>
    </section>
    <section class="card trend">
      <div class="card-head"><h2>停车场实时收入TOP10</h2></div>
      <svg class="chart" viewBox="1442 2730 1376 818">
        <defs><linearGradient id="bar" x1="0" y1="0" x2="0" y2="1"><stop offset="0" stop-color="#1aa3ff"/><stop offset="1" stop-color="#1990e0"/></linearGradient></defs>
        <path class="grid" d="M1576 2813H2738M1576 2891H2738M1576 2969H2738M1576 3047H2738M1576 3123H2738M1576 3201H2738M1576 3279H2738M1576 3357H2738M1576 3435H2738"/>
        <g class="y-big"><text x="1567" y="2816">4000</text><text x="1567" y="2896">3500</text><text x="1567" y="2974">3000</text><text x="1567" y="3048">2500</text><text x="1567" y="3126">2000</text><text x="1567" y="3204">1500</text><text x="1567" y="3282">1000</text><text x="1567" y="3360">500</text><text x="1567" y="3438">0</text></g>
        <g fill="url(#bar)"><rect x="1622" y="2914" width="68" height="522"/><rect x="1734" y="2996" width="68" height="440"/><rect x="1846" y="3086" width="68" height="350"/><rect x="1960" y="3128" width="68" height="308"/><rect x="2072" y="3188" width="68" height="248"/><rect x="2184" y="3216" width="68" height="220"/><rect x="2296" y="3256" width="68" height="180"/><rect x="2410" y="3314" width="68" height="122"/><rect x="2522" y="3340" width="68" height="96"/><rect x="2634" y="3357" width="68" height="79"/></g>
        <g class="bar-label"><text x="1654" y="3474">民生路</text><text x="1765" y="3474">公交大厦</text><text x="1885" y="3474">中国银行</text><text x="1997" y="3474">北国商城</text><text x="2109" y="3474">北国商城</text><text x="2223" y="3474">北国商城</text><text x="2333" y="3474">北国商城</text><text x="2449" y="3474">北国商城</text><text x="2557" y="3474">北国商城</text><text x="2667" y="3474">北国商城</text></g>
        <g class="bar-tip"><path d="M2004 3068H2140Q2142 3068 2142 3070V3114Q2142 3116 2140 3116H2082L2072 3124L2062 3116H2004Q2002 3116 2002 3114V3070Q2002 3068 2004 3068Z"/><text x="2073" y="3102">1200</text></g>
      </svg>
    </section>
  </div>
</main>
</div>
</body>
</html>
```

FILE: styles.css
```css
* { box-sizing: border-box; margin: 0; padding: 0; }
body {
  width: 2880px;
  background: #fff;
  color: #475669;
  font-family: "Noto Sans", "Noto Sans CJK SC", sans-serif;
  font-size: 28px;
  font-weight: 400;
}
svg { display: block; }
i, em, s { font-style: normal; text-decoration: none; }
h1, h2, b { font-weight: 400; }

.bg-green { background: #56bd5b; }
.bg-yellow { background: #f7b324; }
.bg-red { background: #e54a4a; }
.bg-blue { background: #0099fc; }
.bg-purple { background: #8c6bcf; }

/* header */
.topbar { display: flex; justify-content: space-between; align-items: center; height: 120px; padding: 0 47px 0 40px; background: #324057; }
.brand { display: flex; align-items: center; gap: 33px; }
.logo { width: 60px; height: 60px; }
.brand-name { font-size: 36px; font-weight: 700; line-height: 120px; color: #fff; }
.brand-latin { letter-spacing: 2.1px; }
.user { display: flex; align-items: center; gap: 11px; font-size: 32px; line-height: 120px; color: #eff2f7; }
.caret { width: 22px; height: 12px; margin-top: 4px; fill: #c0ccda; }

/* sidebar */
.layout { display: flex; height: 3520px; }
.sidebar { width: 400px; padding-top: 50px; background: #eff2f7; }
.nav-item { display: flex; align-items: center; height: 112px; padding: 0 40px; color: #475669; }
.nav-item span { flex: 1; line-height: 40px; margin-bottom: 4px; }
.nav-icon { width: 40px; height: 40px; margin-right: 15px; margin-bottom: 2px; fill: #5e6d82; }
.active { color: #0099fc; }
.active .nav-icon { fill: #0099fc; }
.chev { width: 24px; height: 14px; margin-bottom: 2px; fill: none; stroke: #475669; stroke-width: 2.5; }

/* content */
.content { flex: 1; display: flex; flex-direction: column; gap: 60px; padding: 0 60px; }
.crumbs { display: flex; height: 56px; padding-top: 41px; font-size: 26px; line-height: 39px; }
.crumbs .sep { width: 53px; text-align: center; color: #c0ccda; }
.crumbs .here { color: #0099fc; }
.card { position: relative; border: 2px solid #c0ccda; border-radius: 8px; background: #fff; }
.row { display: flex; gap: 60px; height: 900px; }
.trend { width: 1380px; }
.side { width: 920px; }
.card-head { display: flex; justify-content: space-between; height: 78px; padding: 37px 31px 0 37px; line-height: 40px; color: #2c3440; }
.card-head h2 { font-size: 28px; }

/* map */
.map-card { height: 1080px; padding: 38px; }
.map { width: 2280px; height: 1000px; }
.parks { fill: #d7ecd3; }
.minor { fill: none; stroke: #f3f3f0; stroke-width: 2; }
.river { fill: none; stroke: #b9d5f1; stroke-width: 4; }
.road-case { fill: none; stroke: #ebebe2; stroke-width: 11; }
.road-fill { fill: none; stroke: #fff; stroke-width: 8; }
.pale-case { fill: none; stroke: #f4efdc; stroke-width: 13; }
.pale-fill { fill: none; stroke: #fff4cf; stroke-width: 9; }
.metro { fill: none; stroke: #bdb9b8; stroke-width: 3; stroke-dasharray: 14 7; }
.stops { fill: #fff; stroke: #bab6b4; stroke-width: 1.5; stroke-dasharray: none; }
.rail-base { fill: none; stroke: #e6e4e3; stroke-width: 4.5; }
.rail-dash { fill: none; stroke: #a8a2a1; stroke-width: 3; stroke-dasharray: 20 20; }
.hw-case { fill: none; stroke: #f0b238; stroke-width: 13; }
.hw-fill { fill: none; stroke: #ffdf4f; stroke-width: 8; }
.badges { fill: #918fe4; }
.badge-text { fill: #fff; font-size: 22px; font-weight: 500; text-anchor: middle; }
.poi, .street, .bridge { font-size: 20px; fill: #72645f; stroke: #fff; stroke-width: 3px; stroke-linejoin: round; paint-order: stroke; font-family: "Noto Sans CJK SC", sans-serif; }
.poi .green { fill: #5d965a; }
.street { font-size: 21px; letter-spacing: 2.5px; fill: #625652; }
.street .tight { letter-spacing: 0; }
.street .loose { letter-spacing: 1px; }
.vertical { writing-mode: vertical-rl; letter-spacing: 3.2px; text-orientation: mixed; }
.bridge { font-size: 22px; font-weight: 500; letter-spacing: 0; fill: #94611e; stroke: #fff2cc; }
.hwname { font-size: 21px; letter-spacing: 2.5px; fill: #75551d; stroke: #ffe7a0; }

.map-legend { position: absolute; left: 66px; top: 66px; width: 200px; height: 192px; padding: 13px 20px; border-radius: 4px; background: rgba(20, 21, 28, .6); color: #fff; font-size: 24px; }
.legend-title { height: 47px; line-height: 40px; }
.legend-row { display: flex; align-items: center; gap: 8px; height: 38.5px; line-height: 38px; white-space: nowrap; }
.bullet { width: 24px; height: 24px; border: 2px solid #fff; border-radius: 50%; }
.map-buttons { position: absolute; right: 64px; top: 66px; display: grid; gap: 20px; }
.map-btn { display: flex; justify-content: center; align-items: center; gap: 16px; width: 200px; height: 82px; padding-bottom: 3px; border: 0; border-radius: 4px; background: #fff; color: #475669; font: inherit; box-shadow: 0 0 12px rgba(71, 86, 105, .22); }
.full-icon { width: 28px; height: 28px; margin-top: 3px; fill: #475669; }

.marker { position: absolute; display: flex; width: 183px; height: 63px; padding: 2px; border-radius: 32px 32px 32px 0; background: #fff; box-shadow: 0 0 4px rgba(71, 86, 105, .3); font-size: 24px; line-height: 60px; }
.m-name { width: 90px; padding-left: 13px; color: #1f2d3d; white-space: nowrap; }
.m-count { flex: 1; height: 59px; border-radius: 0 30px 30px 0; color: #fff; text-align: center; padding-right: 3px; }
.m-green { left: 376px; top: 370px; }
.m-yellow { left: 751px; top: 399px; }
.m-red { left: 1231px; top: 333px; }
.popup { position: absolute; left: 692px; top: 485px; width: 301px; height: 191px; padding: 12px 22px 0 18px; background: #fff; box-shadow: 0 0 4px rgba(71, 86, 105, .35); font-size: 20px; }
.popup::before { content: ""; position: absolute; left: 138px; top: -13px; border: 12px solid transparent; border-top: 0; border-bottom: 14px solid #fff; }
.popup p { display: flex; justify-content: space-between; }
.popup b { color: #1f2d3d; }
.popup-head { height: 60px; margin-bottom: 9px; padding-right: 2px; border-bottom: 2px solid #d3dce6; font-size: 24px; line-height: 48px; }
.popup-row { height: 44px; padding-right: 4px; line-height: 44px; }
.popup em { color: #f7b324; }

/* overview */
.overview { height: 254px; padding-top: 18px; }
.overview-title { padding-left: 31px; font-size: 28px; line-height: 40px; }
.stats { display: flex; align-items: center; height: 148px; margin-top: 18px; padding-left: 37px; }
.stat { display: flex; justify-content: space-between; align-items: center; width: 481px; }
.rule { width: 2px; height: 148px; margin: 0 55px 0 62px; background: #e0e6ed; }
.rule-last { margin: 0 61px 0 56px; }
.disc { display: flex; align-items: center; justify-content: center; width: 122px; height: 122px; margin-top: 4px; border: 2px solid; border-radius: 50%; font-weight: 700; }
.disc svg { width: 56px; fill: currentColor; }
.disc-yen { font-size: 54px; font-weight: 600; }
.disc-p { font-size: 59px; }
.d-yellow { color: #f7b324; background: #fdf0d3; }
.d-blue { color: #0099fc; background: #cceaff; }
.d-green { color: #56bd5b; background: #def2de; }
.d-purple { color: #8c6bcf; background: #e7e1f6; }
.stat-text { text-align: right; }
.stat-text b { display: block; margin-top: 4px; font-size: 55.5px; font-weight: 700; line-height: 68px; color: #2c3440; }
.stat-text span { display: block; font-size: 28px; line-height: 64px; }

/* trend chart */
.series-legend { display: flex; gap: 44px; font-size: 26px; }
.series { display: flex; align-items: center; gap: 16px; color: #475669; }
.series i { display: flex; align-items: center; justify-content: center; width: 60px; height: 24px; background: linear-gradient(currentColor, currentColor) center / 60px 2px no-repeat; }
.series i::before { content: ""; box-sizing: border-box; width: 24px; height: 24px; border: 4px solid currentColor; border-radius: 50%; background: #fff; }
.c-pink i { color: #ee64a4; }
.c-purple i { color: #8c6bcf; }
.c-green i { color: #56bd5b; }
.c-yellow i { color: #f7b324; }
.chart { width: 1376px; height: 818px; }
.grid { fill: none; stroke: #e0e6ed; stroke-width: 2.4; stroke-dasharray: 11 5; }
.y-small { font: 19px Inter, sans-serif; fill: #2c3440; text-anchor: middle; }
.x-axis { font: 23px Inter, sans-serif; letter-spacing: .6px; fill: #2c3440; text-anchor: middle; }
.line { fill: none; stroke-width: 4; }
.line circle { fill: #fff; stroke-width: 5.5; }
.s-blue { stroke: #0099fc; }
.s-green { stroke: #56bd5b; }
.s-yellow { stroke: #f7b324; }
.trend-tip { position: absolute; left: 924px; top: 204px; width: 200px; height: 256px; padding: 12px 16px; border-radius: 14px; background: rgba(33, 45, 62, .85); color: #fff; font-size: 26px; }
.tip-time { height: 54px; line-height: 41px; color: #b4bfcc; font-family: Inter, sans-serif; letter-spacing: .4px; white-space: nowrap; }
.tip-row { display: flex; align-items: center; height: 42px; line-height: 42px; }
.tip-row i { width: 12px; height: 12px; margin-right: 9px; border-radius: 50%; }
.tip-row s { width: 26px; text-align: center; }

/* pie */
.pie { width: 916px; height: 600px; }
.pie-label { font: 700 28px Inter, sans-serif; fill: #fff; text-anchor: middle; }
.pie-legend { display: flex; gap: 104px; padding: 68px 0 0 238px; font-size: 26px; line-height: 40px; }
.key { display: flex; align-items: center; gap: 15px; }
.key i { width: 48px; height: 24px; border-radius: 4px; }
.k-green i { background: #13ce66; }
.k-blue i { background: #20a0ff; }

/* income */
.board { position: relative; display: flex; flex-direction: column; align-items: center; width: 620px; height: 192px; margin: 156px 0 0 148px; padding-top: 8px; border-radius: 20px; background: #eff2f7; }
.board::before, .board::after { content: ""; position: absolute; top: -28px; width: 30px; height: 58px; border-radius: 4px; background: #c0ccda; }
.board::before { left: 70px; }
.board::after { right: 70px; }
.board-label { line-height: 38px; }
.board-sum { padding-left: 18px; font-size: 112px; font-weight: 700; line-height: 106px; word-spacing: -10px; white-space: nowrap; }
.donuts { display: flex; gap: 44px; margin-top: 140px; padding-left: 78px; }
.donut { width: 160px; text-align: center; font-size: 32px; line-height: 40px; color: #1f2d3d; }
.donut:last-child { margin-left: 8px; }
.donut svg { width: 160px; height: 160px; margin-bottom: 26px; }
.donut circle { fill: none; stroke: #e5e9f2; stroke-width: 22; }
.donut path { fill: none; stroke-width: 22; }
.donut text { font-size: 29px; text-anchor: middle; fill: #1f2d3d; }

/* bars */
.y-big { font-size: 24px; fill: #2c3440; text-anchor: end; }
.bar-label { font-size: 24px; fill: #2c3440; text-anchor: middle; }
.bar-tip { fill: #505b67; filter: drop-shadow(0 0 5px rgba(71, 86, 105, .3)); }
.bar-tip text { font-size: 24px; fill: #fff; text-anchor: middle; }
```
